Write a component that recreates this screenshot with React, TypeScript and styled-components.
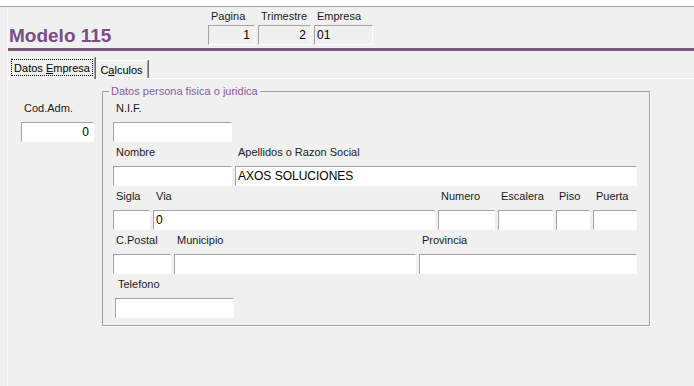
import React from "react";
import styled, { createGlobalStyle } from "styled-components";

const GlobalStyle = createGlobalStyle`
  html, body {
    margin: 0;
    padding: 0;
    background: #f0f0f0;
  }
  body {
    font-family: "Liberation Sans", Arial, sans-serif;
    font-size: 11px;
    color: #1a1a1a;
  }
`;

const Screen = styled.div`
  width: 694px;
  height: 386px;
  overflow: hidden;
  background: #fff;
  padding-top: 6px;
  box-sizing: border-box;
`;

const Window = styled.div`
  height: 100%;
  background: #f0f0f0;
  border-top: 1px solid #a0a0a0;
  padding-left: 7px;
  box-sizing: border-box;
`;

const Frame = styled.div`
  height: 100%;
  border-left: 1px solid #fbfbfb;
`;

const Header = styled.div`
  display: flex;
  align-items: flex-end;
  height: 41px;
  padding: 0 0 3px 1px;
  box-sizing: border-box;
`;

const Title = styled.h1`
  width: 199px;
  margin: 0 0 -1px;
  font-size: 19px;
  line-height: 20px;
  font-weight: bold;
  color: #7b4c86;
`;

const HeaderFields = styled.div`
  display: flex;
  gap: 3px;
`;

const Field = styled.div<{ $w: number; $offset?: number }>`
  display: flex;
  flex-direction: column;
  width: ${(p) => p.$w}px;
  margin-left: ${(p) => p.$offset || 0}px;
  flex: none;
`;

const Label = styled.span<{ $gap?: number }>`
  display: block;
  line-height: 14px;
  padding-left: 3px;
  margin-bottom: ${(p) => (p.$gap === undefined ? 7 : p.$gap)}px;
  white-space: nowrap;
`;

const Box = styled.input<{ $align?: string; $ro?: boolean }>`
  display: block;
  width: 100%;
  height: 20px;
  margin: 0;
  box-sizing: border-box;
  border-style: solid;
  border-width: 1px;
  border-color: #a3a3a3 #fdfdfd #fdfdfd #a3a3a3;
  background: ${(p) => (p.$ro ? "#f0f0f0" : "#fff")};
  padding: 0 ${(p) => (p.$align === "right" ? 4 : 2)}px 0 2px;
  text-align: ${(p) => p.$align || "left"};
  font-family: "Liberation Sans", Arial, sans-serif;
  font-size: 12px;
  color: #000;
  outline: none;
`;

const Rule = styled.div`
  height: 3px;
  background: #7a5a7a;
`;

const TabStrip = styled.div`
  display: flex;
  align-items: flex-end;
  height: 28px;
  padding-left: 1px;
  border-bottom: 1px solid #fff;
  box-sizing: border-box;
`;

const Tab = styled.div<{ $active?: boolean; $w: number }>`
  position: relative;
  z-index: ${(p) => (p.$active ? 1 : 0)};
  width: ${(p) => p.$w}px;
  height: ${(p) => (p.$active ? 22 : 18)}px;
  margin-bottom: ${(p) => (p.$active ? -1 : 0)}px;
  padding: 1px;
  box-sizing: border-box;
  background: #f0f0f0;
  border-top: 1px solid #fff;
  border-left: 1px solid #fff;
  border-right: 1px solid #a0a0a0;
  box-shadow: 1px 0 0 #6a6a6a;
  display: flex;
  align-items: ${(p) => (p.$active ? "flex-start" : "center")};
  justify-content: center;
  color: #000;
`;

const TabCaption = styled.span<{ $focus?: boolean }>`
  display: flex;
  align-items: center;
  justify-content: center;
  width: 100%;
  height: ${(p) => (p.$focus ? "17px" : "auto")};
  box-sizing: border-box;
  border: 1px dotted ${(p) => (p.$focus ? "#000" : "transparent")};
  line-height: 14px;

  u {
    text-decoration: underline;
  }
`;

const Panel = styled.div`
  display: flex;
  align-items: flex-start;
  gap: 8px;
  padding: 5px 0 0 13px;
`;

const CodColumn = styled.div`
  padding-top: 17px;
`;

const Group = styled.fieldset`
  margin: 0;
  width: 548px;
  height: 242px;
  box-sizing: border-box;
  border: 1px solid #a0a0a0;
  box-shadow: 1px 1px 0 #fff;
  padding: 0 0 0 6px;
`;

const Legend = styled.legend`
  padding: 0 2px;
  line-height: 14px;
  color: #8b5a9b;
`;

const Rows = styled.div`
  padding-left: 4px;
`;

const Row = styled.div`
  display: flex;
  gap: 3px;
  margin-top: 3px;
`;

type F = { label: string; w: number; value?: string; offset?: number };

const rows: F[][] = [
  [{ label: "N.I.F.", w: 119 }],
  [
    { label: "Nombre", w: 119 },
    { label: "Apellidos o Razon Social", w: 402, value: "AXOS SOLUCIONES" },
  ],
  [
    { label: "Sigla", w: 37 },
    { label: "Via", w: 282, value: "0" },
    { label: "Numero", w: 57 },
    { label: "Escalera", w: 55 },
    { label: "Piso", w: 34 },
    { label: "Puerta", w: 44 },
  ],
  [
    { label: "C.Postal", w: 58 },
    { label: "Municipio", w: 242 },
    { label: "Provincia", w: 218 },
  ],
  [{ label: "Telefono", w: 119, offset: 2 }],
];

const App = () => {
  return (
    <Screen>
      <GlobalStyle />
      <Window>
        <Frame>
          <Header>
            <Title>Modelo 115</Title>
            <HeaderFields>
              <Field $w={47}>
                <Label $gap={2}>Pagina</Label>
                <Box $ro $align="right" readOnly value="1" />
              </Field>
              <Field $w={53}>
                <Label $gap={2}>Trimestre</Label>
                <Box $ro $align="right" readOnly value="2" />
              </Field>
              <Field $w={59}>
                <Label $gap={2}>Empresa</Label>
                <Box $ro readOnly value="01" />
              </Field>
            </HeaderFields>
          </Header>
          <Rule />
          <TabStrip>
            <Tab $active $w={86}>
              <TabCaption $focus>
                Datos&nbsp;<u>E</u>mpresa
              </TabCaption>
            </Tab>
            <Tab $w={53}>
              <TabCaption>
                C<u>a</u>lculos
              </TabCaption>
            </Tab>
          </TabStrip>
          <Panel>
            <CodColumn>
              <Field $w={73}>
                <Label>Cod.Adm.</Label>
                <Box $align="right" readOnly value="0" />
              </Field>
            </CodColumn>
            <Group>
              <Legend>Datos persona fisica o juridica</Legend>
              <Rows>
                {rows.map((row, i) => (
                  <Row key={i}>
                    {row.map((f) => (
                      <Field key={f.label} $w={f.w} $offset={f.offset}>
                        <Label>{f.label}</Label>
                        <Box readOnly value={f.value || ""} />
                      </Field>
                    ))}
                  </Row>
                ))}
              </Rows>
            </Group>
          </Panel>
        </Frame>
      </Window>
    </Screen>
  );
};

export default App;
